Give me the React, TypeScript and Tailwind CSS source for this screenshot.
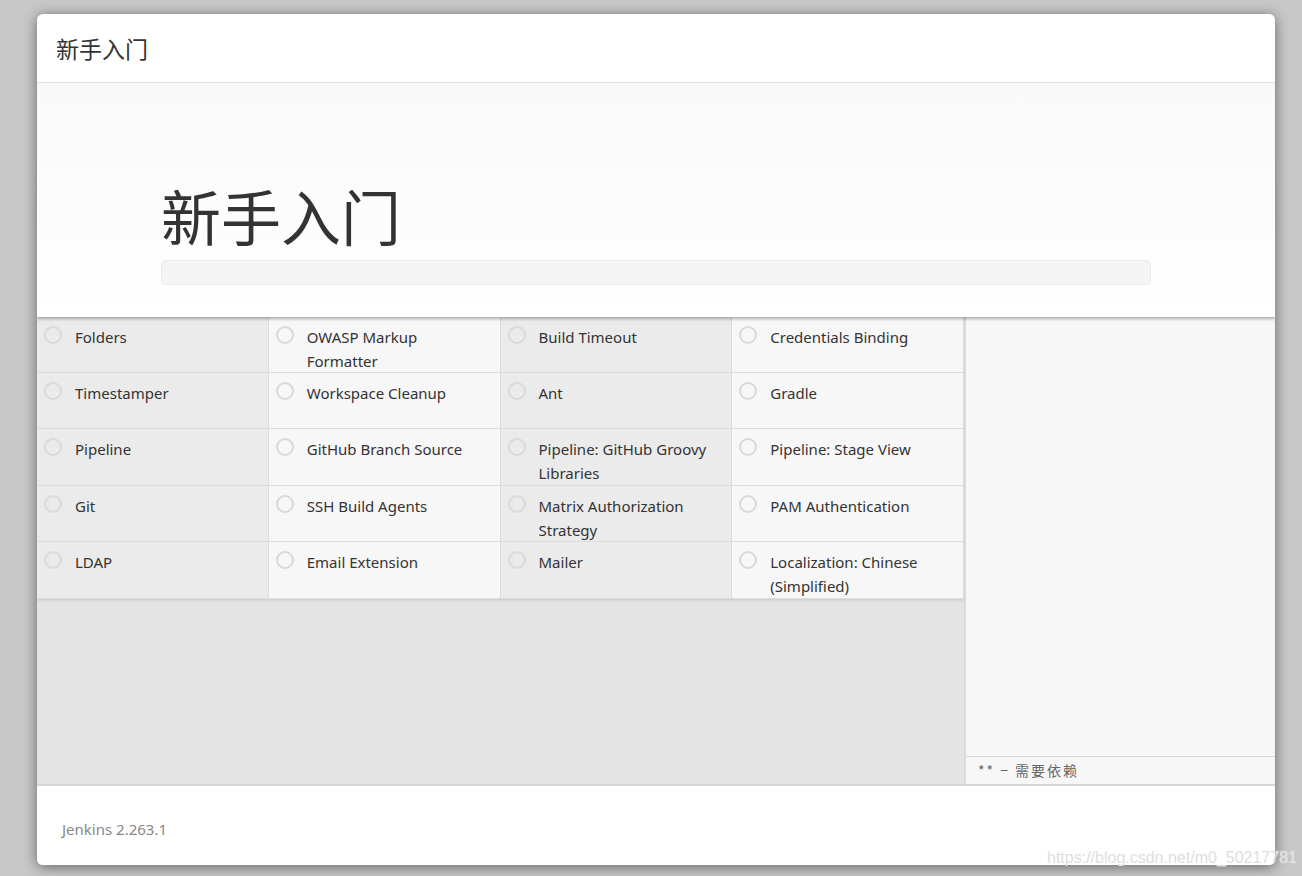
import React from 'react';

// Suggested plugin list, laid out row by row across four columns
const plugins: string[] = [
  'Folders',
  'OWASP Markup Formatter',
  'Build Timeout',
  'Credentials Binding',
  'Timestamper',
  'Workspace Cleanup',
  'Ant',
  'Gradle',
  'Pipeline',
  'GitHub Branch Source',
  'Pipeline: GitHub Groovy Libraries',
  'Pipeline: Stage View',
  'Git',
  'SSH Build Agents',
  'Matrix Authorization Strategy',
  'PAM Authentication',
  'LDAP',
  'Email Extension',
  'Mailer',
  'Localization: Chinese (Simplified)',
];

const sans = "font-['Segoe_UI','Noto_Sans','Noto_Sans_CJK_SC',sans-serif]";

const PluginCell = ({ name, index }: { name: string; index: number }) => {
  const col = index % 4;
  const shaded = col === 0 || col === 2;
  return (
    <div
      className={`flex items-start h-full border-r border-b border-[#dcdcdc] pl-[7px] pt-[8px] pr-3 ${
        shaded ? 'bg-[#ebebeb]' : 'bg-[#f7f7f7]'
      }`}
    >
      <span className="mt-[1px] w-[18px] h-[18px] shrink-0 rounded-full border-2 border-[#d9d9d9]" />
      <span className="ml-[13px] text-[15px] leading-6 text-[#333]">{name}</span>
    </div>
  );
};

const App: React.FC = () => {
  return (
    <div className={`relative w-[1302px] h-[876px] bg-[#c8c8c8] pt-[14px] pl-[37px] ${sans}`}>
      <div className="w-[1238px] h-[851px] bg-white rounded-[6px] overflow-hidden flex flex-col shadow-[0_2px_14px_rgba(0,0,0,0.5)]">
        {/* header */}
        <div className="h-[69px] shrink-0 flex items-center px-[19px] border-b border-[#e5e5e5]">
          <h4 className="text-[23px] text-[#333] font-['Noto_Sans_CJK_SC',sans-serif]">新手入门</h4>
        </div>

        {/* hero with progress bar */}
        <div className="relative z-10 h-[234px] shrink-0 bg-gradient-to-b from-[#f9f9f9] to-white shadow-[0_2px_3px_rgba(0,0,0,0.3)] px-[124px] pt-[96px]">
          <h1 className="text-[60px] leading-[72px] text-[#333] font-['Noto_Sans_CJK_SC',sans-serif]">新手入门</h1>
          <div className="mt-[9px] w-[990px] h-[25px] rounded-[4px] bg-[#f4f4f4] border border-[#ececec]" />
        </div>

        {/* plugin list and dependency panel */}
        <div className="h-[469px] shrink-0 flex border-b-2 border-[#d5d5d5]">
          <div className="w-[929px] bg-[#e4e4e4] border-r-2 border-[#dcdcdc]">
            <div className="grid grid-cols-4 grid-rows-[56px_56px_57px_56px_57px] shadow-[0_2px_2px_rgba(0,0,0,0.08)]">
              {plugins.map((p, i) => (
                <PluginCell key={p} name={p} index={i} />
              ))}
            </div>
          </div>
          <div className="flex-1 flex flex-col bg-[#f7f7f7]">
            <div className="flex-1" />
            <div className="h-[28px] border-t border-[#d9d9d9] pl-[12px] flex items-center text-[14px] tracking-[2px] text-[#666] font-['Noto_Sans_CJK_SC',sans-serif]">
              ** − 需要依赖
            </div>
          </div>
        </div>

        {/* footer */}
        <div className="flex-1 bg-white flex items-center pl-[25px] pt-[8px]">
          <span className="text-[15px] text-[#888]">Jenkins 2.263.1</span>
        </div>
      </div>

      <span className="absolute left-[1047px] bottom-[6px] text-[16px] text-[#dedede] [text-shadow:0_0_1px_rgba(255,255,255,0.9)] font-['Liberation_Sans',sans-serif]">
        https://blog.csdn.net/m0_50217781
      </span>
    </div>
  );
};

export default App;
